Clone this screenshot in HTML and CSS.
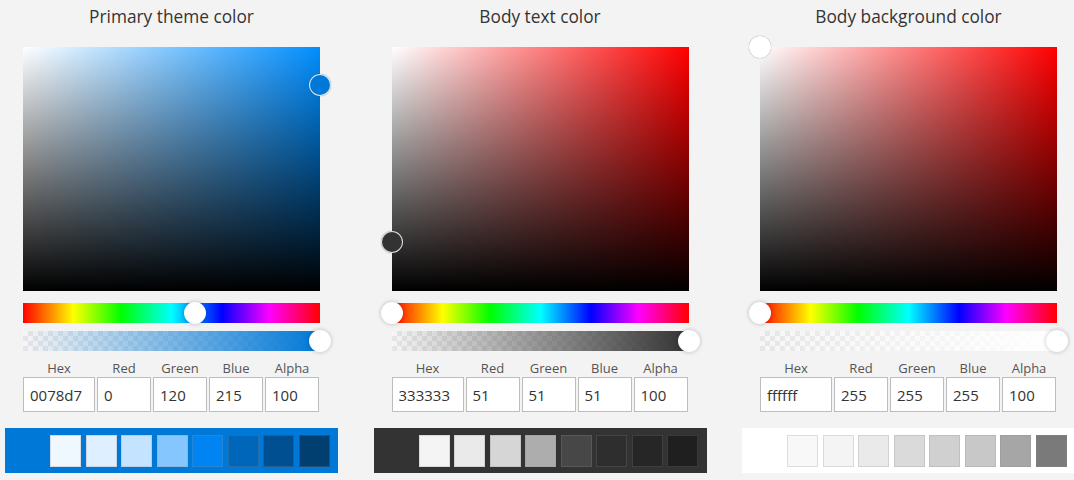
FILE: index.html
```html
<!DOCTYPE html>
<html lang="en">
<head>
    <meta charset="UTF-8">
    <title>Theme colors</title>
    <link rel="stylesheet" href="styles.css">
</head>
<body>

<div class="pickers">

    <div class="column">
        <div class="title">Primary theme color</div>
        <div class="area" style="--hue: #008eff">
            <div class="area-thumb" style="left: 100%; top: 15.7%; background: #0078d7"></div>
        </div>
        <div class="slider hue">
            <div class="thumb" style="left: 57.9%"></div>
        </div>
        <div class="slider alpha" style="--color: #0078d7">
            <div class="thumb" style="left: 100%"></div>
        </div>
        <div class="fields">
            <div class="field hex"><label>Hex</label><input type="text" value="0078d7"></div>
            <div class="field"><label>Red</label><input type="text" value="0"></div>
            <div class="field"><label>Green</label><input type="text" value="120"></div>
            <div class="field"><label>Blue</label><input type="text" value="215"></div>
            <div class="field"><label>Alpha</label><input type="text" value="100"></div>
        </div>
        <div class="strip" style="background: #0078d7">
            <div class="swatch" style="background: #eff7ff"></div>
            <div class="swatch" style="background: #deefff"></div>
            <div class="swatch" style="background: #c4e3ff"></div>
            <div class="swatch" style="background: #86c6ff"></div>
            <div class="swatch" style="background: #0084f2"></div>
            <div class="swatch" style="background: #0066ba"></div>
            <div class="swatch" style="background: #004f90"></div>
            <div class="swatch" style="background: #003f70"></div>
        </div>
    </div>

    <div class="column">
        <div class="title">Body text color</div>
        <div class="area" style="--hue: #ff0000">
            <div class="area-thumb" style="left: 0%; top: 80%; background: #333333"></div>
        </div>
        <div class="slider hue">
            <div class="thumb" style="left: 0%"></div>
        </div>
        <div class="slider alpha" style="--color: #333333">
            <div class="thumb" style="left: 100%"></div>
        </div>
        <div class="fields">
            <div class="field hex"><label>Hex</label><input type="text" value="333333"></div>
            <div class="field"><label>Red</label><input type="text" value="51"></div>
            <div class="field"><label>Green</label><input type="text" value="51"></div>
            <div class="field"><label>Blue</label><input type="text" value="51"></div>
            <div class="field"><label>Alpha</label><input type="text" value="100"></div>
        </div>
        <div class="strip" style="background: #333333">
            <div class="swatch" style="background: #f4f4f4"></div>
            <div class="swatch" style="background: #eaeaea"></div>
            <div class="swatch" style="background: #d6d6d6"></div>
            <div class="swatch" style="background: #adadad"></div>
            <div class="swatch" style="background: #474747"></div>
            <div class="swatch" style="background: #2e2e2e"></div>
            <div class="swatch" style="background: #262626"></div>
            <div class="swatch" style="background: #1f1f1f"></div>
        </div>
    </div>

    <div class="column">
        <div class="title">Body background color</div>
        <div class="area" style="--hue: #ff0000">
            <div class="area-thumb" style="left: 0%; top: 0%; background: #ffffff"></div>
        </div>
        <div class="slider hue">
            <div class="thumb" style="left: 0%"></div>
        </div>
        <div class="slider alpha" style="--color: #ffffff">
            <div class="thumb" style="left: 100%"></div>
        </div>
        <div class="fields">
            <div class="field hex"><label>Hex</label><input type="text" value="ffffff"></div>
            <div class="field"><label>Red</label><input type="text" value="255"></div>
            <div class="field"><label>Green</label><input type="text" value="255"></div>
            <div class="field"><label>Blue</label><input type="text" value="255"></div>
            <div class="field"><label>Alpha</label><input type="text" value="100"></div>
        </div>
        <div class="strip" style="background: #ffffff">
            <div class="swatch" style="background: #f8f8f8"></div>
            <div class="swatch" style="background: #f4f4f4"></div>
            <div class="swatch" style="background: #eaeaea"></div>
            <div class="swatch" style="background: #dadada"></div>
            <div class="swatch" style="background: #d0d0d0"></div>
            <div class="swatch" style="background: #c8c8c8"></div>
            <div class="swatch" style="background: #a6a6a6"></div>
            <div class="swatch" style="background: #7a7a7a"></div>
        </div>
    </div>

</div>

</body>
</html>
```

FILE: styles.css
```css
body {
    margin: 0;
    background: #f3f3f3;
    font-family: "Open Sans", Arial, sans-serif;
    color: #333;
    overflow: hidden;
}

.pickers {
    display: flex;
    gap: 35.5px;
    padding-left: 5px;
}

.column {
    width: 333px;
    flex-shrink: 0;
    display: flex;
    flex-direction: column;
    align-items: center;
}

.title {
    font-size: 17.3px;
    line-height: 34px;
    height: 47px;
    color: #333;
}

.area {
    position: relative;
    width: 297px;
    height: 244px;
    background: linear-gradient(to bottom, rgba(0, 0, 0, 0), #000),
                linear-gradient(to right, #fff, var(--hue));
}

.area-thumb {
    position: absolute;
    width: 20px;
    height: 20px;
    margin: -11px 0 0 -11px;
    border: 1px solid rgba(255, 255, 255, 0.85);
    border-radius: 50%;
    box-shadow: 0 0 1px rgba(0, 0, 0, 0.5);
}

.slider {
    position: relative;
    width: 297px;
    height: 20px;
}

.hue {
    margin-top: 12px;
    background: linear-gradient(to right, #f00, #ff0 17%, #0f0 33%, #0ff 50%, #00f 67%, #f0f 83%, #f00);
}

.alpha {
    margin-top: 8px;
    background: linear-gradient(to right, rgba(255, 255, 255, 0), var(--color)),
                conic-gradient(#e6e6e6 25%, #f6f6f6 0 50%, #e6e6e6 0 75%, #f6f6f6 0) 0 0 / 10px 10px;
}

.thumb {
    position: absolute;
    top: -1px;
    width: 22px;
    height: 22px;
    margin-left: -11px;
    border-radius: 50%;
    background: #fff;
    box-shadow: 0 0 4px rgba(0, 0, 0, 0.25);
}

.fields {
    display: flex;
    gap: 2px;
    width: 297px;
    margin-top: 9px;
}

.field {
    display: flex;
    flex-direction: column;
    width: 54px;
}

.field.hex {
    width: 72px;
}

.field label {
    font-size: 13px;
    line-height: 17px;
    color: #555;
    text-align: center;
}

.field input {
    width: 100%;
    height: 35px;
    box-sizing: border-box;
    border: 1px solid #bdbdbd;
    background: #fff;
    padding: 0 6px;
    font-family: "Open Sans", Arial, sans-serif;
    font-size: 15px;
    color: #333;
}

.strip {
    margin-top: 16px;
    width: 333px;
    height: 45px;
    box-sizing: border-box;
    padding: 7px 0 0 45px;
    display: flex;
    gap: 4.5px;
}

.swatch {
    width: 31px;
    height: 32px;
    box-sizing: border-box;
    border: 1px solid rgba(140, 140, 140, 0.25);
}
```
